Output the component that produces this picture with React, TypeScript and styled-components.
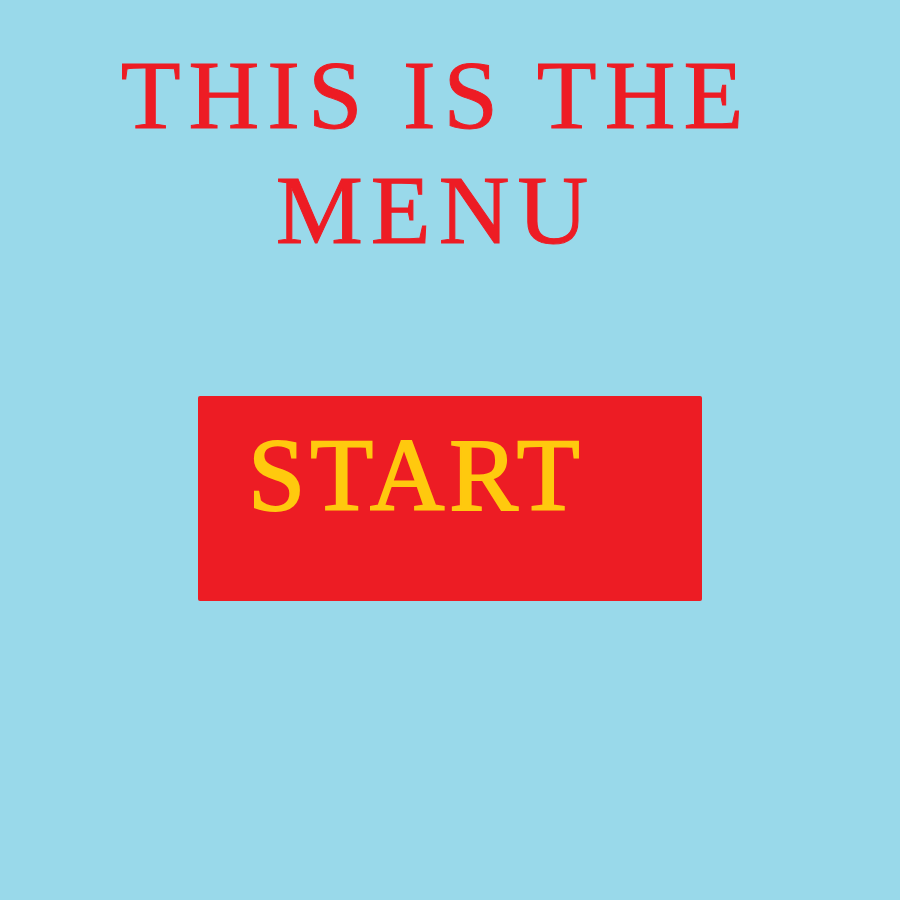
import { FC } from 'react';
import styled, { createGlobalStyle } from 'styled-components';

const GlobalStyle = createGlobalStyle`
  html, body {
    margin: 0;
    padding: 0;
    background: #99d9ea;
  }
`;

const Page = styled.main`
  min-height: 100vh;
  display: flex;
  flex-direction: column;
  align-items: flex-start;
  font-family: 'Liberation Serif', 'DejaVu Serif', serif;
`;

const Title = styled.h1`
  width: 872px;
  margin: 38px 0 0;
  text-align: center;
  font-size: 98px;
  font-weight: 400;
  line-height: 115px;
  letter-spacing: 8px;
  color: #ed1c24;
  text-transform: uppercase;
  -webkit-text-stroke: 1px #ed1c24;
`;

const StartButton = styled.button`
  margin: 128px 0 0 198px;
  width: 504px;
  height: 205px;
  padding: 28px 0 0 50px;
  border: none;
  border-radius: 2px;
  background: #ed1c24;
  color: #ffc90e;
  font-family: inherit;
  font-size: 103px;
  font-weight: 400;
  letter-spacing: 5px;
  line-height: 1;
  text-align: left;
  display: flex;
  align-items: flex-start;
  cursor: pointer;
  -webkit-text-stroke: 2px #ffc90e;
`;

const App: FC = () => (
  <>
    <GlobalStyle />
    <Page>
      <Title>
        This is the
        <br />
        menu
      </Title>
      <StartButton>START</StartButton>
    </Page>
  </>
);

export default App;
